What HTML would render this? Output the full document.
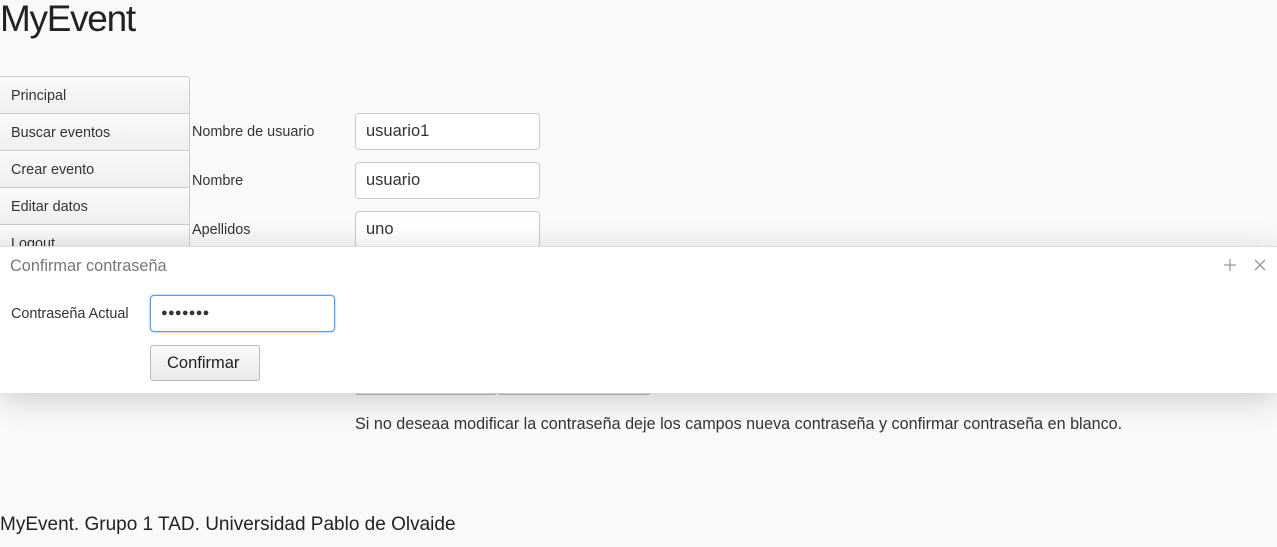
<!DOCTYPE html>
<html><head><meta charset="utf-8"><style>
*{box-sizing:border-box;margin:0;padding:0}
body{width:1277px;height:547px;overflow:hidden;background:#f9f9f9;font-family:"Liberation Sans",sans-serif;color:#333;position:relative}
.abs{position:absolute}
h1{position:absolute;left:0;top:-2px;font-size:37px;font-weight:normal;color:#222;letter-spacing:-1.3px}
.menu{left:0;top:76px;width:190px}
.menu div{height:38px;border:1px solid #ccc;border-left:none;margin-top:-1px;background:linear-gradient(#fafafa,#efefef);font-size:14.4px;padding:11px 11px;color:#333}
.menu div:first-child{border-radius:0 3px 0 0;margin-top:0}
.lbl{font-size:14.4px;color:#333}
.inp{width:185px;height:37px;border:1px solid #c9c9c9;border-radius:4px;background:#fff;font-size:16.5px;padding:8px 10px;color:#333}
.modal{left:0;top:246px;width:1277px;height:147px;background:#fff;border-top:1px solid #ddd;box-shadow:0 6px 30px rgba(0,0,0,.18)}
.btn{border:1px solid #bbb;border-radius:3px;background:linear-gradient(#fbfbfb,#eaeaea);font-size:16.5px;color:#222}
</style></head><body>
<h1>MyEvent</h1>
<div class="abs menu">
<div>Principal</div><div>Buscar eventos</div><div>Crear evento</div><div>Editar datos</div><div>Logout</div>
</div>
<div class="abs lbl" style="left:192px;top:124px">Nombre de usuario</div>
<div class="abs lbl" style="left:192px;top:173px">Nombre</div>
<div class="abs lbl" style="left:192px;top:222px">Apellidos</div>
<div class="abs inp" style="left:355px;top:113px">usuario1</div>
<div class="abs inp" style="left:355px;top:162px">usuario</div>
<div class="abs inp" style="left:355px;top:211px">uno</div>
<div class="abs btn" style="left:355px;top:370px;width:142px;height:25px"></div>
<div class="abs btn" style="left:498px;top:370px;width:152px;height:25px"></div>
<div class="abs modal">
  <div class="abs" style="left:10px;top:10px;font-size:16.3px;color:#777">Confirmar contraseña</div>
  <svg class="abs" style="left:1223px;top:11px" width="14" height="14"><path d="M7 1V13M1 7H13" stroke="#999" stroke-width="1.3"/></svg>
  <svg class="abs" style="left:1253px;top:11px" width="14" height="14"><path d="M2 2L12 12M12 2L2 12" stroke="#999" stroke-width="1.3"/></svg>
  <div class="abs lbl" style="left:11px;top:59px">Contraseña Actual</div>
  <div class="abs inp" style="left:150px;top:48px;height:37px;border:1px solid #5b9be0;box-shadow:0 0 2px #7ab3f0;font-size:11px;letter-spacing:0.3px;padding-top:11px;color:#333">●●●●●●●</div>
  <div class="abs btn" style="left:150px;top:98px;width:110px;height:36px;padding:8px 16px">Confirmar</div>
</div>
<div class="abs" style="left:355px;top:415px;font-size:16.15px;color:#333">Si no deseaa modificar la contraseña deje los campos nueva contraseña y confirmar contraseña en blanco.</div>
<div class="abs" style="left:0;top:514px;font-size:19px;color:#222">MyEvent. Grupo 1 TAD. Universidad Pablo de Olvaide</div>
</body></html>
